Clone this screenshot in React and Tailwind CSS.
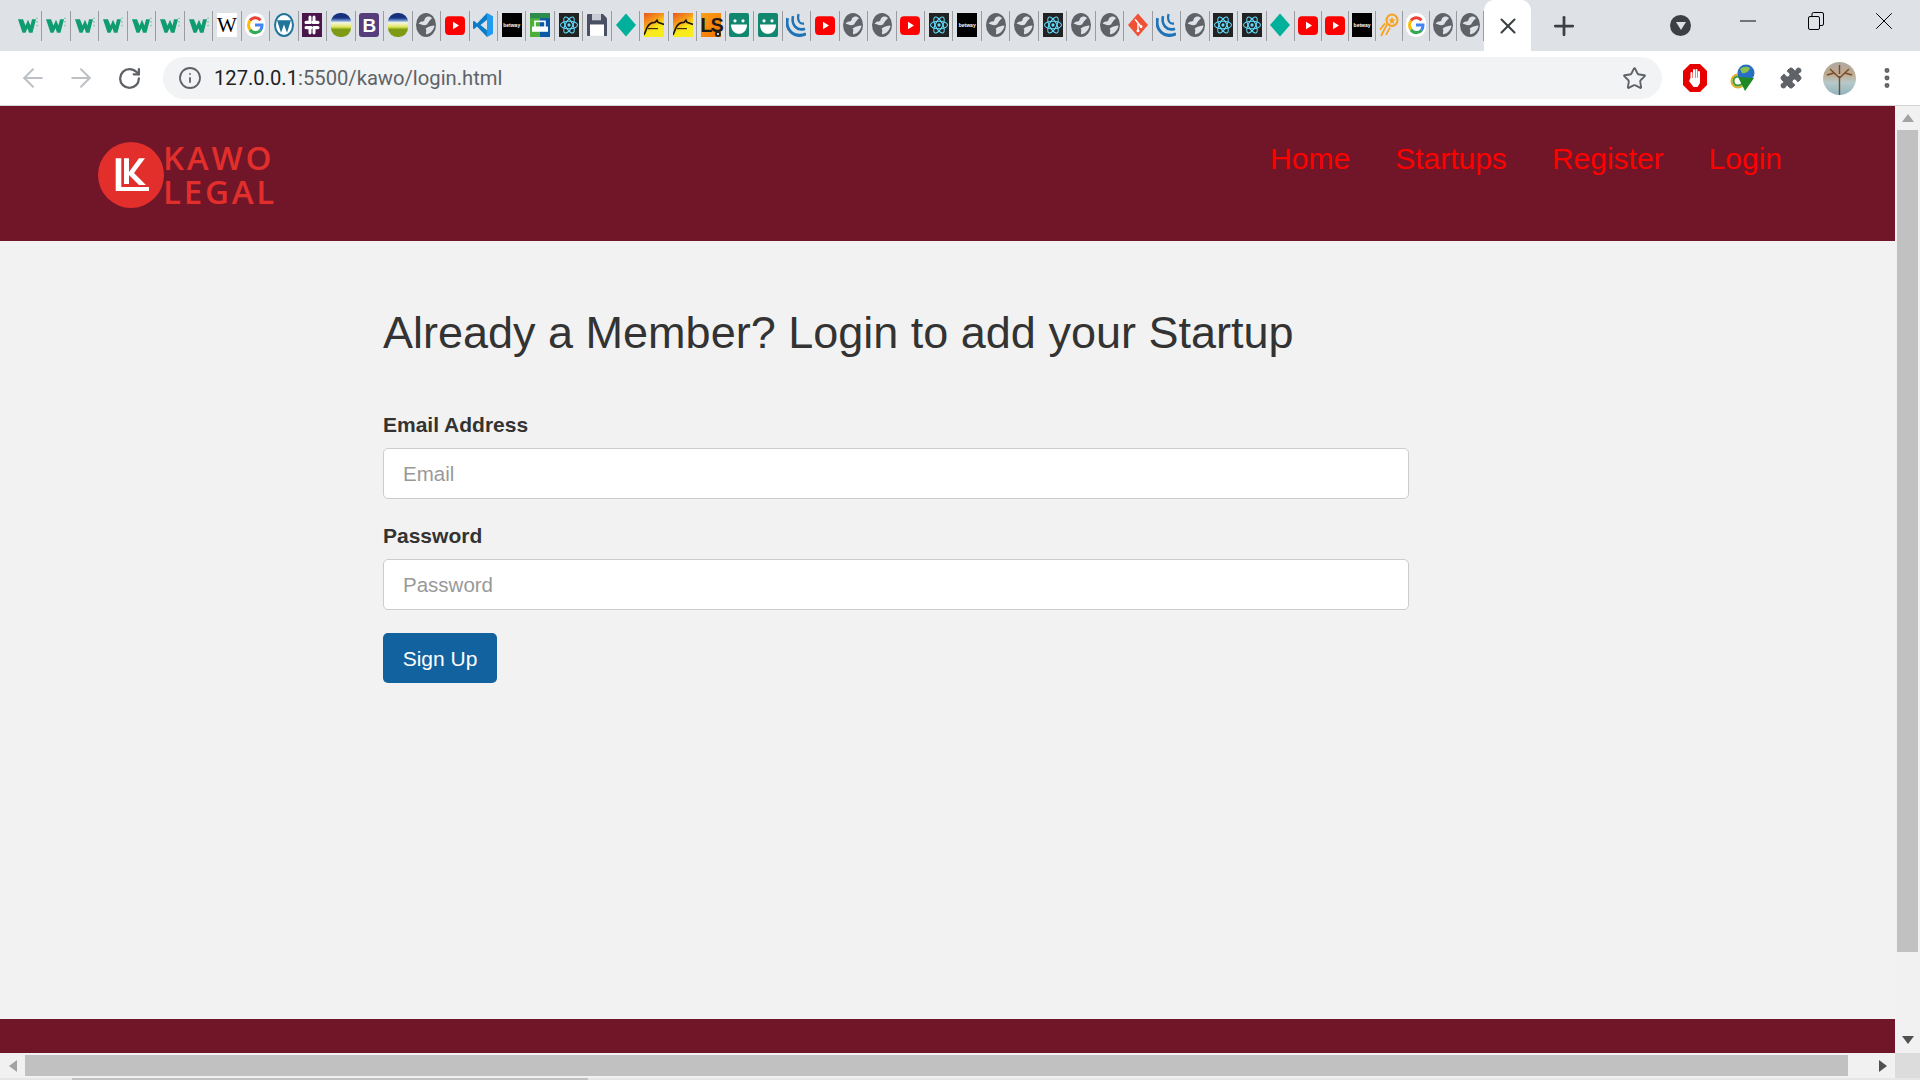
import { ArrowLeft, ArrowRight, RotateCw, Info, Star, MoreVertical, X, Plus, Minus, Puzzle } from "lucide-react";

const SANS = "font-['Liberation_Sans',Arial,sans-serif]";

const TABS = [
  "wix", "wix", "wix", "wix", "wix", "wix", "wix", "wiki", "google", "wp", "slack", "rw", "boot", "rw", "globe", "yt",
  "vs", "betway", "sofa", "react", "save", "diamond", "fire", "fire", "ls", "smile", "smile", "jq", "yt", "globe",
  "globe", "yt", "react", "betway", "globe", "globe", "react", "globe", "globe", "git", "jq", "globe", "react", "react",
  "diamond", "yt", "yt", "betway", "rocket", "google", "globe", "globe",
];

// viewBox is stretched a bit, the favicons in the shot are taller than wide
function Svg({ children, className = "" }) {
  return (
    <svg viewBox="0 0 20 23" preserveAspectRatio="none" className={`w-[20px] h-[24px] ${className}`}>
      {children}
    </svg>
  );
}

function Favicon({ kind }) {
  switch (kind) {
    case "wix":
      return (
        <Svg>
          <polygon points="0,6 5,6 7.5,12 10,6.5 12.5,12 14,6 18,6 14.5,19 11,19 9.5,14.5 7.5,19 4.5,19" fill="#0f9d6f" />
          <circle cx="19" cy="5" r="0.8" fill="#7cc4a6" />
          <circle cx="19" cy="8.5" r="0.8" fill="#7cc4a6" />
          <circle cx="19" cy="12" r="0.8" fill="#7cc4a6" />
        </Svg>
      );
    case "wiki":
      return (
        <div className="w-[20px] h-[24px] bg-white flex items-center justify-center font-['Liberation_Serif',serif] text-[21px] leading-none text-black">
          W
        </div>
      );
    case "google":
      return (
        <Svg>
          <rect width="20" height="23" rx="9" fill="#fff" />
          <path d="M15.5 7 A7 7.5 0 0 0 5 7.2" fill="none" stroke="#ea4335" strokeWidth="3" />
          <path d="M5 7.2 A7 7.5 0 0 0 5 16" fill="none" stroke="#fbbc05" strokeWidth="3" />
          <path d="M5 16 A7 7.5 0 0 0 15.5 16.5" fill="none" stroke="#34a853" strokeWidth="3" />
          <path d="M15.5 16.5 A7 7.5 0 0 0 17 11.5 H10" fill="none" stroke="#4285f4" strokeWidth="3" />
        </Svg>
      );
    case "wp":
      return (
        <Svg>
          <ellipse cx="10" cy="11.5" rx="10" ry="11.5" fill="#21759b" />
          <ellipse cx="10" cy="11.5" rx="8" ry="9.5" fill="#fff" />
          <path d="M3 7 L7 19 L10 11 L13 19 L17 7 Z" fill="#21759b" />
        </Svg>
      );
    case "slack":
      return (
        <Svg>
          <rect width="20" height="23" fill="#4a154b" />
          <path d="M8 4 V9 M12 14 V19 M4 14 H9 M11 9 H16" stroke="#fff" strokeWidth="3" strokeLinecap="round" />
          <path d="M12 4 V9 M8 14 V19 M4 9 H8 M12 14 H16" stroke="#fff" strokeWidth="3" strokeLinecap="round" />
        </Svg>
      );
    case "rw":
      return (
        <div className="w-[20px] h-[24px] rounded-[9px] bg-[linear-gradient(#17317f_0%,#17317f_20%,#5d86c8_30%,#f4f6e4_40%,#e4e86f_56%,#bccf3a_62%,#7f9a14_68%,#7f9a14_100%)]" />
      );
    case "boot":
      return (
        <div className="w-[20px] h-[24px] rounded-[3px] bg-[#563d7c] flex items-center justify-center font-['Liberation_Sans',sans-serif] font-bold text-[19px] leading-none text-white">
          B
        </div>
      );
    case "globe":
      return (
        <Svg>
          <ellipse cx="10" cy="11.5" rx="10" ry="11.5" fill="#5f6368" />
          <path d="M2.5 10 C6 6.5 8 10 9 5 C11 3 14 2.5 16 5 C13 7.5 12.5 9 11 11 C8 12.5 5 11 2.5 10 Z" fill="#dee1e6" />
          <path d="M9.5 15 C13 12.5 16 12.5 18.5 12 C18 16 15 19.5 10.5 20.5 C9 18.5 11.5 17 9.5 15 Z" fill="#dee1e6" />
        </Svg>
      );
    case "yt":
      return (
        <Svg>
          <rect y="3" width="20" height="18" rx="4" fill="#ff0000" />
          <polygon points="8,8.5 14,12 8,15.5" fill="#fff" />
        </Svg>
      );
    case "vs":
      return (
        <Svg>
          <path d="M14 0 L20 3 V20 L14 23 Z" fill="#1f9cf0" />
          <path d="M14 0 L4 10 L1 7.5 L0 8.5 V14.5 L1 15.5 L4 13 L14 23 V16.5 L7.5 11.5 L14 6.5 Z" fill="#0a7cc9" />
        </Svg>
      );
    case "betway":
      return (
        <div className="w-[20px] h-[24px] bg-black flex items-center justify-center font-['Liberation_Sans',sans-serif] font-bold text-[5px] leading-none text-white">
          betway
        </div>
      );
    case "sofa":
      return (
        <Svg>
          <rect width="10" height="23" fill="#4caf3a" />
          <rect x="10" width="10" height="23" fill="#0b57a8" />
          <rect y="0" width="20" height="5" fill="#2e8b4e" />
          <rect x="5" y="8" width="10" height="6" fill="none" stroke="#fff" strokeWidth="1.6" />
          <rect x="2" y="13" width="16" height="5" fill="#fff" />
        </Svg>
      );
    case "react":
      return (
        <Svg>
          <rect width="20" height="23" fill="#222222" />
          <g fill="none" stroke="#61dafb" strokeWidth="1">
            <ellipse cx="10" cy="11.5" rx="8.5" ry="3.6" />
            <ellipse cx="10" cy="11.5" rx="8.5" ry="3.6" transform="rotate(60 10 11.5)" />
            <ellipse cx="10" cy="11.5" rx="8.5" ry="3.6" transform="rotate(120 10 11.5)" />
          </g>
          <circle cx="10" cy="11.5" r="1.6" fill="#61dafb" />
        </Svg>
      );
    case "save":
      return (
        <Svg>
          <path d="M1 1 H16 L20 5 V22 H1 Q0 22 0 21 V2 Q0 1 1 1 Z" fill="#4a4f63" />
          <rect x="5" y="1" width="9" height="6" fill="#c8cbd6" />
          <rect x="3" y="11" width="14" height="11" fill="#fff" />
        </Svg>
      );
    case "diamond":
      return (
        <Svg>
          <polygon points="10,0.5 20,11.5 10,22.5 0,11.5" fill="#00b09b" />
        </Svg>
      );
    case "fire":
      return (
        <div className="w-[20px] h-[24px] bg-[linear-gradient(150deg,#e8561e_0%,#f59a1a_35%,#f8e81a_60%,#f8ee1e_100%)] flex">
          <Svg>
            <path d="M0 21 L3 14 C5 10 8 9 11 9 L13 7 L14 9 L20 11" fill="none" stroke="#241708" strokeWidth="1.7" />
            <path d="M4 15 H14" stroke="#241708" strokeWidth="1" />
          </Svg>
        </div>
      );
    case "ls":
      return (
        <div className="relative w-[20px] h-[24px] bg-[linear-gradient(135deg,#f9a11b,#f56f00)] flex items-center justify-center font-['Liberation_Sans',sans-serif] font-bold text-[20px] leading-none tracking-[-2px] text-[#1a1a1a]">
          LS
          <span className="absolute right-0 bottom-0 w-[6px] h-[6px] rounded-full bg-white border-2 border-[#222222]" />
        </div>
      );
    case "smile":
      return (
        <Svg>
          <rect width="20" height="23" rx="2" fill="#12876f" />
          <circle cx="6" cy="7.5" r="1.6" fill="#fff" />
          <circle cx="14" cy="7.5" r="1.6" fill="#fff" />
          <path d="M2 11 H18 C18 17 14 20 10 20 C6 20 2 17 2 11 Z" fill="#fff" />
        </Svg>
      );
    case "jq":
      return (
        <Svg>
          <g fill="none" stroke="#1f74b8">
            <path d="M1.5 5 C-1 16 8 25 20 20" strokeWidth="3" />
            <path d="M7 3 C5 11 11 18 19 15" strokeWidth="2.6" />
            <path d="M12.5 1 C11 7 13.5 11 18 10" strokeWidth="2.2" />
          </g>
        </Svg>
      );
    case "git":
      return (
        <Svg>
          <polygon points="10,0.5 20,11.5 10,22.5 0,11.5" fill="#f05033" />
          <path d="M7 6 L13 13 M10 9 V17" stroke="#fff" strokeWidth="1.4" />
          <circle cx="13" cy="13" r="1.5" fill="#fff" />
          <circle cx="10" cy="17" r="1.5" fill="#fff" />
        </Svg>
      );
    case "rocket":
      return (
        <Svg>
          <circle cx="13" cy="7" r="5.5" fill="none" stroke="#f9a11b" strokeWidth="2" />
          <polygon points="13,3.5 14,6 16.5,6.2 14.5,8 15.2,10.5 13,9 10.8,10.5 11.5,8 9.5,6.2 12,6" fill="#f9a11b" />
          <path d="M8 11 L2 22 M11 14 L7 21 M6 10 L1 16" stroke="#f9a11b" strokeWidth="1.7" />
        </Svg>
      );
    default:
      return null;
  }
}

function TabStrip() {
  return (
    <div className="h-[51px] flex items-start bg-[#dee1e6] shrink-0">
      <div className="w-[1484px] h-full flex items-start pl-[14px] pt-[11px] overflow-hidden">
        {TABS.map((kind, i) => (
          <div
            key={i}
            className={`${i < 45 ? "w-[28.47px]" : "w-[27px]"} h-[30px] shrink-0 flex justify-center items-start pt-[2px] border-r border-[#9a9ca0]`}
          >
            <Favicon kind={kind} />
          </div>
        ))}
      </div>
      <div className="w-[47px] h-full bg-white rounded-t-[10px] flex items-center justify-center">
        <X size={26} strokeWidth={1.9} className="text-[#3c4043]" />
      </div>
      <div className="ml-[18px] h-full flex items-center">
        <Plus size={30} strokeWidth={2.2} className="text-[#3c4043]" />
      </div>
      <div className="ml-[91px] h-full flex items-center">
        <div className="w-[21px] h-[21px] rounded-full bg-[#3c4043] flex items-center justify-center">
          <svg viewBox="0 0 10 8" className="w-[10px] h-[8px]">
            <polygon points="0,0 10,0 5,8" fill="#dee1e6" />
          </svg>
        </div>
      </div>
      <div className="ml-[23px] flex items-start">
        <div className="w-[68px] h-[42px] flex items-center justify-center">
          <Minus size={26} strokeWidth={0.9} className="text-black" />
        </div>
        <div className="w-[68px] h-[42px] flex items-center justify-center">
          <svg viewBox="0 0 16 18" className="w-[16px] h-[18px]" fill="none" stroke="#000" strokeWidth="1">
            <rect x="0.5" y="4.5" width="11" height="13" rx="1.5" />
            <path d="M4 4 V2 Q4 0.5 5.5 0.5 H14 Q15.5 0.5 15.5 2 V12 Q15.5 13.5 14 13.5 H12" />
          </svg>
        </div>
        <div className="w-[68px] h-[42px] flex items-center justify-center">
          <X size={30} strokeWidth={0.8} className="text-black" />
        </div>
      </div>
    </div>
  );
}

function ToolbarCell({ children }) {
  return <div className="w-[48px] h-full flex items-center justify-center">{children}</div>;
}

function Toolbar() {
  return (
    <div className="h-[55px] flex items-center bg-white border-b border-[#d4d4d4] shrink-0">
      <div className="pl-[9px] h-full flex items-center">
        <ToolbarCell><ArrowLeft size={30} strokeWidth={1.6} className="text-[#bdc1c6]" /></ToolbarCell>
        <ToolbarCell><ArrowRight size={30} strokeWidth={1.6} className="text-[#bdc1c6]" /></ToolbarCell>
        <ToolbarCell><RotateCw size={25} strokeWidth={2.2} className="text-[#5f6368]" /></ToolbarCell>
      </div>
      <div className="ml-[10px] w-[1499px] h-[42px] rounded-full bg-[#f1f3f4] flex items-center pl-[15px] pr-[15px]">
        <Info size={24} strokeWidth={1.8} className="text-[#5f6368] shrink-0" />
        <span className="ml-[12px] flex-1 font-['Roboto',sans-serif] text-[20.2px] leading-none text-[#5f6368]">
          <span className="text-[#202124]">127.0.0.1</span>:5500/kawo/login.html
        </span>
        <Star size={25} strokeWidth={1.8} className="text-[#5f6368] shrink-0" />
      </div>
      <div className="ml-[9px] h-full flex items-center">
        <ToolbarCell>
          <svg viewBox="0 0 24 28" className="w-[24px] h-[28px]">
            <polygon points="7,0 17,0 24,7 24,21 17,28 7,28 0,21 0,7" fill="#e60000" />
            <path d="M8.5 16 V9 M11 15 V6 M13.5 15 V6 M16 16 V8" stroke="#fff" strokeWidth="2" strokeLinecap="round" />
            <path d="M7.5 14 H17 V19 L14.5 23 H10.5 L6 17 Z" fill="#fff" />
          </svg>
        </ToolbarCell>
        <ToolbarCell>
          <svg viewBox="0 0 26 28" className="w-[26px] h-[28px]">
            <ellipse cx="8" cy="17" rx="6.5" ry="6.5" fill="none" stroke="#e0b020" strokeWidth="2" />
            <ellipse cx="8" cy="17" rx="4.5" ry="4.5" fill="none" stroke="#3a9a3a" strokeWidth="2" />
            <circle cx="16" cy="9" r="8.5" fill="#2a6fc4" />
            <path d="M10 5 Q15 1 20 4 Q18 10 12 9 Z" fill="#8cc24a" />
            <polygon points="8,13 24,14 15,27" fill="#1f8a24" />
          </svg>
        </ToolbarCell>
        <ToolbarCell><Puzzle size={24} strokeWidth={1} fill="#5f6368" className="text-[#5f6368]" /></ToolbarCell>
        <ToolbarCell>
          <div className="w-[33px] h-[33px] rounded-full overflow-hidden bg-[linear-gradient(#b0aaa2_0%,#bca88e_35%,#b8c8c8_62%,#8fb4bc_100%)]">
            <svg viewBox="0 0 33 33" className="w-[33px] h-[33px]">
              <path d="M16.5 33 V14 M16.5 16 L7 7 M16.5 16 L26 7 M16.5 12 V3 M11 11 L4 13 M22 11 L29 13" stroke="#7a4a28" strokeWidth="1.4" fill="none" />
            </svg>
          </div>
        </ToolbarCell>
        <ToolbarCell><MoreVertical size={26} strokeWidth={2.6} className="text-[#5f6368]" /></ToolbarCell>
      </div>
    </div>
  );
}

function Logo() {
  return (
    <div className="flex items-start pt-[36px]">
      <svg viewBox="0 0 66 66" className="w-[66px] h-[66px] shrink-0">
        <circle cx="33" cy="33" r="33" fill="#e32f2c" />
        <path d="M17.7 16.3 H23.3 V45 H51 V49 H17.7 Z" fill="#fff" />
        <path d="M26 16.3 H31 V30 L41 16.3 H47 L36 31 L48 43 H41 L31 33 V42 H26 Z" fill="#fff" />
      </svg>
      <div className="-ml-[1px] -mt-[1px] font-['Open_Sans',sans-serif] font-semibold text-[33px] leading-[34px] tracking-[2.8px] text-[#e32f2c]">
        <div>KAWO</div>
        <div>LEGAL</div>
      </div>
    </div>
  );
}

function Header() {
  return (
    <header className={`h-[135px] shrink-0 bg-[#701628] flex items-start justify-between pl-[98px] pr-[113px] ${SANS}`}>
      <Logo />
      <nav className="flex gap-[45px] pt-[36px] text-[30px] leading-[34px] text-[#ff0000]">
        <a href="#home">Home</a>
        <a href="#startups">Startups</a>
        <a href="#register">Register</a>
        <a href="#login">Login</a>
      </nav>
    </header>
  );
}

function LoginForm() {
  return (
    <main className={`flex-1 bg-[#f2f2f2] pl-[383px] pt-[64px] ${SANS}`}>
      <h1 className="text-[45px] leading-[56px] font-normal text-[#333333]">
        Already a Member? Login to add your Startup
      </h1>
      <div className="w-[1026px] mt-[50px]">
        <label className="block text-[21px] leading-[28px] font-bold text-[#333333]">Email Address</label>
        <input
          type="text"
          placeholder="Email"
          className="mt-[9px] block w-full h-[51px] px-[19px] rounded-[5px] bg-white border border-[#cccccc] text-[20.5px] outline-none placeholder:text-[#999999]"
        />
        <label className="block mt-[23px] text-[21px] leading-[28px] font-bold text-[#333333]">Password</label>
        <input
          type="password"
          placeholder="Password"
          className="mt-[9px] block w-full h-[51px] px-[19px] rounded-[5px] bg-white border border-[#cccccc] text-[20.5px] outline-none placeholder:text-[#999999]"
        />
        <button className="mt-[23px] block w-[114px] h-[50px] rounded-[5px] bg-[#12629f] text-white text-[21px] leading-none">
          Sign Up
        </button>
      </div>
    </main>
  );
}

function Arrow({ points, className = "" }) {
  return (
    <svg viewBox="0 0 12 12" className={`w-[12px] h-[12px] ${className}`}>
      <polygon points={points} fill="currentColor" />
    </svg>
  );
}

export default function App() {
  return (
    <div className="w-[1920px] h-[1080px] flex flex-col overflow-hidden bg-white">
      <TabStrip />
      <Toolbar />

      <div className="flex-1 min-h-0 flex">
        <div className="w-[1895px] flex flex-col">
          <Header />
          <LoginForm />
          <div className="h-[34px] shrink-0 bg-[#701628]" />
        </div>
        {/* vertical scrollbar */}
        <div className="w-[25px] flex flex-col items-center bg-[#f1f1f1]">
          <div className="h-[24px] w-full flex items-center justify-center text-[#a3a3a3]">
            <Arrow points="0,10 12,10 6,2" />
          </div>
          <div className="w-[21px] h-[822px] bg-[#c1c1c1]" />
          <div className="flex-1 w-full flex items-end justify-center pb-[7px] text-[#505050]">
            <Arrow points="0,2 12,2 6,10" />
          </div>
        </div>
      </div>

      {/* horizontal scrollbar */}
      <div className="h-[25px] shrink-0 flex bg-[#f1f1f1]">
        <div className="w-[1895px] flex items-center">
          <div className="w-[25px] flex justify-center text-[#a3a3a3]">
            <Arrow points="10,0 10,12 2,6" />
          </div>
          <div className="w-[1823px] h-[21px] bg-[#c1c1c1]" />
          <div className="flex-1 flex justify-center pl-[22px] text-[#505050]">
            <Arrow points="2,0 2,12 10,6" />
          </div>
        </div>
        <div className="w-[25px] bg-[#dcdcdc]" />
      </div>
      <div className="h-[2px] shrink-0 flex bg-[#e6e6e6]">
        <div className="ml-[72px] w-[516px] bg-[#c1c1c1]" />
      </div>
    </div>
  );
}
